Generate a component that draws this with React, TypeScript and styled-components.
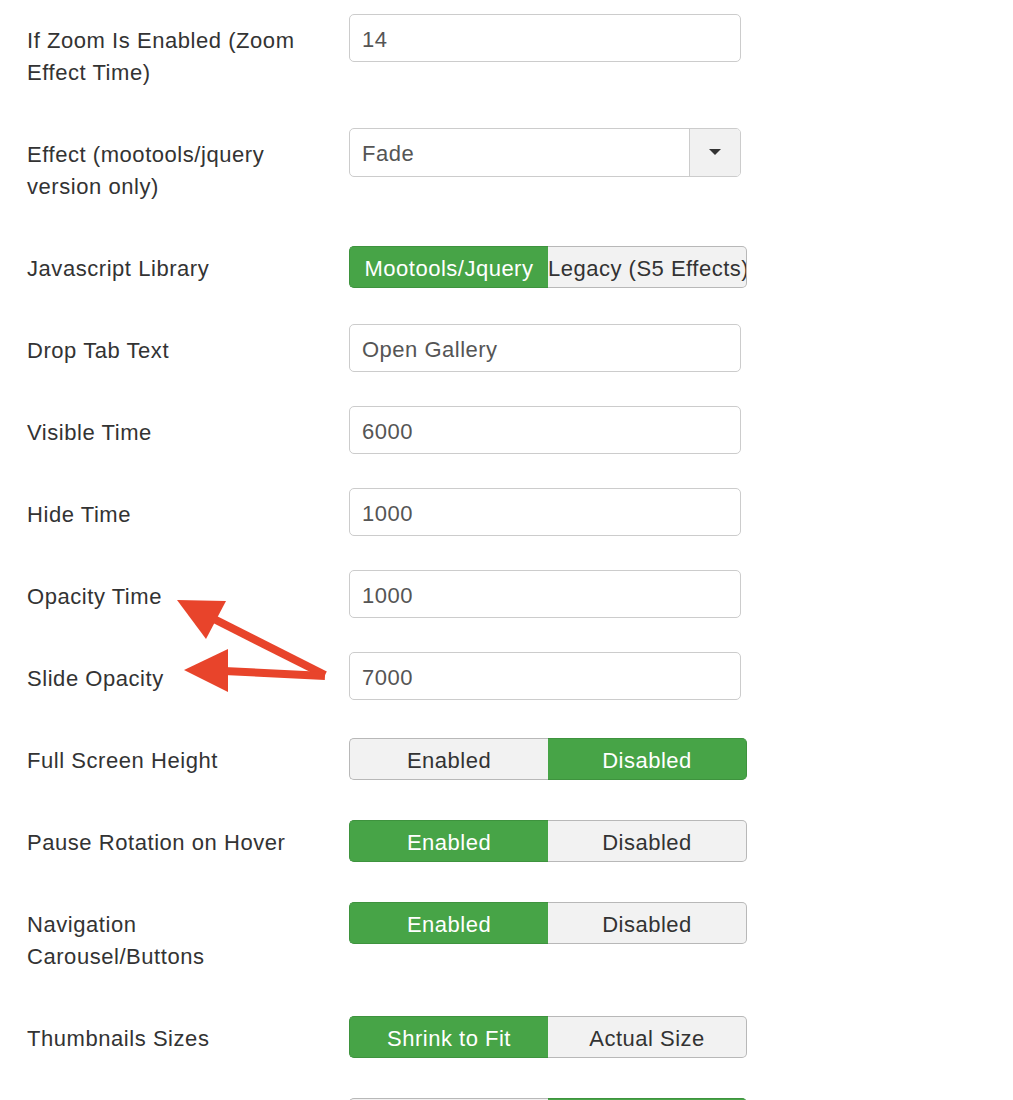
import React from "react";
import styled, { createGlobalStyle } from "styled-components";

const Global = createGlobalStyle`
  html, body { margin: 0; padding: 0; background: #ffffff; }
  body { font-family: "Liberation Sans", Helvetica, Arial, sans-serif; }
  * { box-sizing: border-box; }
`;

const Page = styled.div`
  position: relative;
  padding: 14px 0 0 27px;
  width: 1013px;
  min-height: 1100px;
  overflow: hidden;
`;

const Row = styled.div`
  display: flex;
  align-items: flex-start;
  margin-bottom: 34px;
`;

const Label = styled.div`
  width: 322px;
  flex: none;
  padding: 11px 37px 5px 0;
  font-size: 22px;
  letter-spacing: 0.55px;
  line-height: 32px;
  color: #333333;
`;

const TextInput = styled.input`
  width: 392px;
  height: 48px;
  border: 1px solid #cccccc;
  border-radius: 5px;
  padding: 3px 12px 0;
  font-family: "Liberation Sans", Helvetica, Arial, sans-serif;
  font-size: 22px;
  letter-spacing: 0.5px;
  color: #555555;
  background: #ffffff;
  outline: none;
`;

const Select = styled.div`
  width: 392px;
  height: 49px;
  display: flex;
  border: 1px solid #cccccc;
  border-radius: 5px;
  overflow: hidden;
  background: #ffffff;
`;

const SelectValue = styled.div`
  flex: 1;
  display: flex;
  align-items: center;
  padding: 3px 12px 0;
  font-size: 22px;
  letter-spacing: 0.5px;
  color: #555555;
`;

const SelectCaret = styled.div`
  width: 51px;
  flex: none;
  display: flex;
  align-items: center;
  justify-content: center;
  background: #f1f1f1;
  border-left: 1px solid #cccccc;
  &::after {
    content: "";
    display: block;
    margin-top: -2px;
    border-left: 6px solid transparent;
    border-right: 6px solid transparent;
    border-top: 6px solid #333333;
  }
`;

const Toggle = styled.div`
  margin-top: 4px;
  display: flex;
  width: 398px;
  height: 42px;
`;

const ToggleButton = styled.div<{ $active: boolean }>`
  width: 199px;
  flex: none;
  height: 42px;
  display: flex;
  align-items: center;
  justify-content: center;
  overflow: hidden;
  white-space: nowrap;
  padding-top: 3px;
  font-size: 22px;
  letter-spacing: 0.5px;
  background: ${(p) => (p.$active ? "#47a447" : "#f2f2f2")};
  color: ${(p) => (p.$active ? "#ffffff" : "#333333")};
  border: 1px solid ${(p) => (p.$active ? "#3e933e" : "#b8b8b8")};
  &:first-child {
    border-radius: 5px 0 0 5px;
    border-right: none;
  }
  &:last-child {
    border-radius: 0 5px 5px 0;
    border-left: none;
  }
`;

const ToggleText = styled.span<{ $overflow?: boolean }>`
  display: block;
  ${(p) => (p.$overflow ? "width: 100%; text-align: left;" : "")}
`;

const Overlay = styled.svg`
  position: absolute;
  left: 0;
  top: 0;
  pointer-events: none;
`;

type Field =
  | { kind: "input"; label: React.ReactNode; value: string }
  | { kind: "select"; label: React.ReactNode; value: string }
  | { kind: "toggle"; label: React.ReactNode; options: [string, string]; active: 0 | 1; overflow?: boolean };

const fields: Field[] = [
  { kind: "input", label: "If Zoom Is Enabled (Zoom Effect Time)", value: "14" },
  { kind: "select", label: "Effect (mootools/jquery version only)", value: "Fade" },
  { kind: "toggle", label: "Javascript Library", options: ["Mootools/Jquery", "Legacy (S5 Effects)"], active: 0, overflow: true },
  { kind: "input", label: "Drop Tab Text", value: "Open Gallery" },
  { kind: "input", label: "Visible Time", value: "6000" },
  { kind: "input", label: "Hide Time", value: "1000" },
  { kind: "input", label: "Opacity Time", value: "1000" },
  { kind: "input", label: "Slide Opacity", value: "7000" },
  { kind: "toggle", label: "Full Screen Height", options: ["Enabled", "Disabled"], active: 1 },
  { kind: "toggle", label: "Pause Rotation on Hover", options: ["Enabled", "Disabled"], active: 0 },
  { kind: "toggle", label: "Navigation Carousel/Buttons", options: ["Enabled", "Disabled"], active: 0 },
  { kind: "toggle", label: "Thumbnails Sizes", options: ["Shrink to Fit", "Actual Size"], active: 0 },
  { kind: "toggle", label: "Show Thumbnails", options: ["Enabled", "Disabled"], active: 1 },
];

function Control({ field }: { field: Field }) {
  if (field.kind === "input") {
    return <TextInput type="text" defaultValue={field.value} readOnly />;
  }
  if (field.kind === "select") {
    return (
      <Select>
        <SelectValue>{field.value}</SelectValue>
        <SelectCaret />
      </Select>
    );
  }
  return (
    <Toggle>
      {field.options.map((opt, i) => (
        <ToggleButton key={opt} $active={field.active === i}>
          <ToggleText $overflow={field.overflow && i === 1}>{opt}</ToggleText>
        </ToggleButton>
      ))}
    </Toggle>
  );
}

export default function App() {
  return (
    <>
      <Global />
      <Page>
        {fields.map((f, i) => (
          <Row key={i}>
            <Label>{f.label}</Label>
            <Control field={f} />
          </Row>
        ))}
        <Overlay width={1013} height={1100} viewBox="0 0 1013 1100">
          <g fill="#e8442b" stroke="none">
            <polygon points="177,600 226,601 206,639" />
            <polygon points="184,670 228,649 228,692" />
          </g>
          <g stroke="#e8442b" strokeWidth={8} fill="none">
            <line x1="212" y1="618" x2="325" y2="675" />
            <line x1="224" y1="671" x2="325" y2="676" />
          </g>
        </Overlay>
      </Page>
    </>
  );
}
